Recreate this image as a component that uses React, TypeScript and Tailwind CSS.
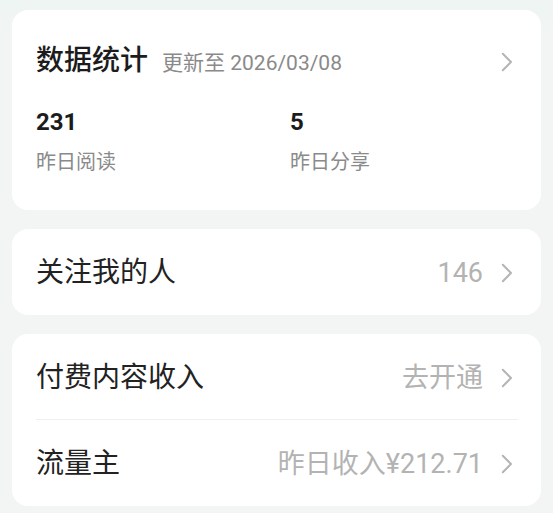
import React from "react";

const Chevron = () => (
  <svg width="12" height="20" viewBox="0 0 12 20" fill="none" className="shrink-0">
    <path d="M1.8 1.8 L10 10 L1.8 18.2" stroke="#b5b5b5" strokeWidth="2" strokeLinecap="round" strokeLinejoin="round" />
  </svg>
);

const font = { fontFamily: 'Roboto, "Noto Sans CJK SC", "Noto Sans", sans-serif' };

function Row({ label, value, h }: { label: string; value?: string; h: string }) {
  return (
    <div className={`flex items-center justify-between pl-6 pr-[28px] pt-[2px] ${h}`}>
      <span className="text-[28px] leading-[36px] text-[#222222]">{label}</span>
      <div className="flex items-center gap-[18px]">
        {value && <span className="text-[27px] leading-[36px] text-[#b3b3b3]">{value}</span>}
        <Chevron />
      </div>
    </div>
  );
}

export default function App() {
  return (
    <div
      style={font}
      className="min-h-[513px] w-full bg-gradient-to-b from-[#eef5f3] to-[#f3f5f5] to-[40px] px-3 pt-[10px] flex flex-col gap-[19px]"
    >
      <div className="h-[200px] rounded-2xl bg-white pl-6 pr-[28px] pt-[34px]">
        <div className="flex items-center justify-between h-[36px]">
          <div className="flex items-baseline gap-[14px]">
            <span className="text-[28px] leading-[36px] font-medium text-[#1c1c1c]">数据统计</span>
            <span className="text-[21px] leading-[36px] text-[#8a8a8a]">更新至 2026/03/08</span>
          </div>
          <Chevron />
        </div>
        <div className="flex mt-[26px]">
          <div className="w-[254px] flex flex-col">
            <span className="text-[24px] leading-[32px] font-bold text-[#1c1c1c]">231</span>
            <span className="mt-[10px] text-[20px] leading-[28px] text-[#8a8a8a]">昨日阅读</span>
          </div>
          <div className="flex flex-col">
            <span className="text-[24px] leading-[32px] font-bold text-[#1c1c1c]">5</span>
            <span className="mt-[10px] text-[20px] leading-[28px] text-[#8a8a8a]">昨日分享</span>
          </div>
        </div>
      </div>

      <div className="rounded-2xl bg-white">
        <Row label="关注我的人" value="146" h="h-[86px]" />
      </div>

      <div className="rounded-2xl bg-white">
        <Row label="付费内容收入" value="去开通" h="h-[85px]" />
        <div className="ml-6 mr-[23px] h-px bg-[#efefef]" />
        <Row label="流量主" value="昨日收入¥212.71" h="h-[86px]" />
      </div>
    </div>
  );
}
